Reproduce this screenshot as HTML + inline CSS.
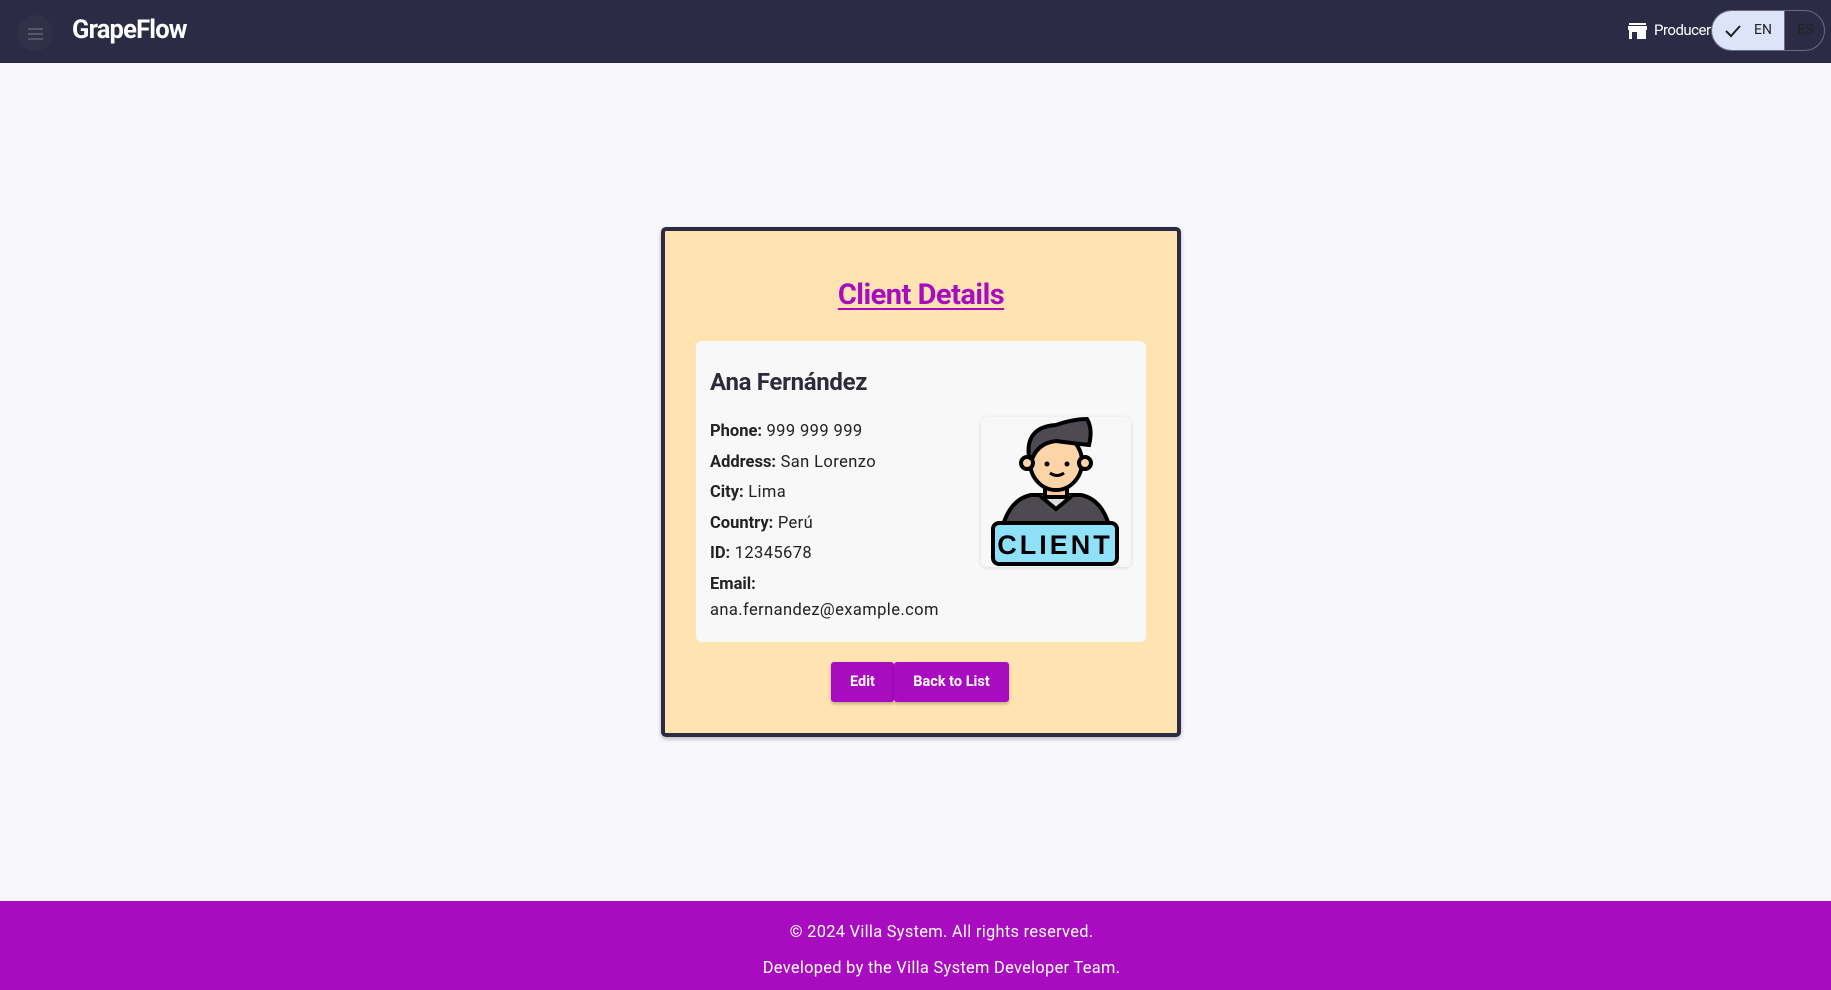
<!DOCTYPE html>
<html><head><meta charset="utf-8">
<style>
*{box-sizing:border-box;margin:0;padding:0}
body{width:1831px;height:990px;background:#f8f8fc;font-family:"Roboto","Liberation Sans",sans-serif;position:relative;overflow:hidden}
.nav{position:absolute;left:0;top:0;width:1831px;height:63px;background:#2b2b45}
.menu{position:absolute;left:17px;top:15px;width:36px;height:36px;border-radius:50%;background:#303049}
.menu i{position:absolute;left:11px;width:15px;height:2px;background:#55556a}
.logo{position:absolute;left:72px;top:15px;color:#fff;font-weight:bold;font-size:25.5px;letter-spacing:-0.8px}
.prod{position:absolute;left:1654px;top:21px;color:#fff;font-size:15px;letter-spacing:-0.5px}
.tog{position:absolute;left:1711px;top:10px;width:114px;height:41px;border:1px solid #6a6a80;border-radius:21px;overflow:hidden}
.tog .en{position:absolute;left:0;top:0;width:72px;height:100%;background:#dde3f8;color:#222;font-size:14px}
.tog .es{position:absolute;left:72px;top:0;width:42px;height:100%;color:#222;font-size:14px;text-align:center;line-height:39px;border-left:1px solid #6a6a80}
.card{position:absolute;left:661px;top:227px;width:520px;height:510px;background:#ffe3b1;border:4px solid #2b2b45;border-radius:5px;box-shadow:0 2px 4px rgba(0,0,0,.25)}
h1{position:absolute;left:0;width:100%;top:47px;text-align:center;color:#a80bc0;font-size:29px;text-decoration:underline;text-decoration-thickness:2px;text-underline-offset:4px;letter-spacing:-0.5px}
.inner{position:absolute;left:31px;top:110px;width:450px;height:301px;background:#f8f8f8;border-radius:6px}
.name{position:absolute;left:14px;top:27px;font-size:24px;font-weight:bold;color:#2b2b3a;letter-spacing:-0.3px}
.info{position:absolute;left:14px;top:76px;font-size:16.5px;color:#222;line-height:30.6px;letter-spacing:0.4px}
.info b{letter-spacing:0}
.img{position:absolute;left:285px;top:76px;width:150px;height:150px;border-radius:6px;background:#f8f8f8;box-shadow:0 1px 4px rgba(0,0,0,.12)}
.btn{position:absolute;top:431px;height:40px;background:#a80bc0;color:#fff;font-weight:bold;font-size:14.5px;text-align:center;line-height:40px;border-radius:3px;box-shadow:0 2px 3px rgba(0,0,0,.25)}
.foot{position:absolute;left:0;top:901px;width:1831px;height:89px;background:#a80bc0;color:#fff;text-align:center;font-size:16.4px;letter-spacing:0.3px}
.foot div{position:absolute;left:26px;width:1831px}
</style></head><body>
<div class="nav">
 <div class="menu"><i style="top:13px"></i><i style="top:18px"></i><i style="top:23px"></i></div>
 <div class="logo">GrapeFlow</div>
 <svg style="position:absolute;left:1628px;top:23px" width="19" height="16" viewBox="0 0 19 16"><rect x="1" y="0" width="17" height="2" fill="#fff"/><path d="M0 3h19v4H0z" fill="#fff"/><rect x="1" y="7" width="17" height="9" fill="#fff"/><rect x="4" y="9" width="5" height="7" fill="#2b2b45"/></svg>
 <div class="prod">Producer</div>
 <div class="tog"><div class="en"><svg style="position:absolute;left:12px;top:12px" width="18" height="16" viewBox="0 0 18 16"><path d="M2 8l5 5L16 3" stroke="#222" stroke-width="2" fill="none"/></svg><span style="position:absolute;left:42px;top:11px">EN</span></div><div class="es">ES</div></div>
</div>
<div class="card">
 <h1>Client Details</h1>
 <div class="inner">
  <div class="name">Ana Fernández</div>
  <div class="info"><b>Phone:</b> 999 999 999<br><b>Address:</b> San Lorenzo<br><b>City:</b> Lima<br><b>Country:</b> Perú<br><b>ID:</b> 12345678<br><b>Email:</b><br><div style="line-height:20px;margin-top:0">ana.fernandez@example.com</div></div>
  <div class="img">
   <svg width="150" height="150" viewBox="0 0 150 150">
    <path d="M22 108 Q30 82 50 78 L100 78 Q120 82 128 108Z" fill="#4e4a52" stroke="#000" stroke-width="4"/>
    <path d="M58 78 L75 92 L92 78" fill="#ddd" stroke="#000" stroke-width="4"/>
    <rect x="64" y="60" width="22" height="20" fill="#f8c89a" stroke="#000" stroke-width="4"/>
    <ellipse cx="75" cy="45" rx="26" ry="28" fill="#fdd3a8" stroke="#000" stroke-width="4"/>
    <circle cx="46" cy="46" r="6" fill="#fdd3a8" stroke="#000" stroke-width="4"/>
    <circle cx="104" cy="46" r="6" fill="#fdd3a8" stroke="#000" stroke-width="4"/>
    <path d="M48 40 Q44 10 75 8 Q92 2 106 2 Q112 12 108 28 Q90 26 75 24 Q58 26 52 40Z" fill="#4e4a52" stroke="#000" stroke-width="4"/>
    <circle cx="66" cy="47" r="2.5"/><circle cx="86" cy="47" r="2.5"/>
    <path d="M69 56 Q76 61 83 56" stroke="#000" stroke-width="3" fill="none"/>
    <rect x="12" y="106" width="124" height="41" rx="6" fill="#8fe1fa" stroke="#000" stroke-width="4"/>
    <text x="74" y="137" text-anchor="middle" font-family="Liberation Sans,sans-serif" font-weight="bold" font-size="27" letter-spacing="3">CLIENT</text>
   </svg>
  </div>
 </div>
 <div class="btn" style="left:166px;width:63px">Edit</div>
 <div class="btn" style="left:229px;width:115px">Back to List</div>
</div>
<div class="foot"><div style="top:22px">© 2024 Villa System. All rights reserved.</div><div style="top:58px">Developed by the Villa System Developer Team.</div></div>
</body></html>
